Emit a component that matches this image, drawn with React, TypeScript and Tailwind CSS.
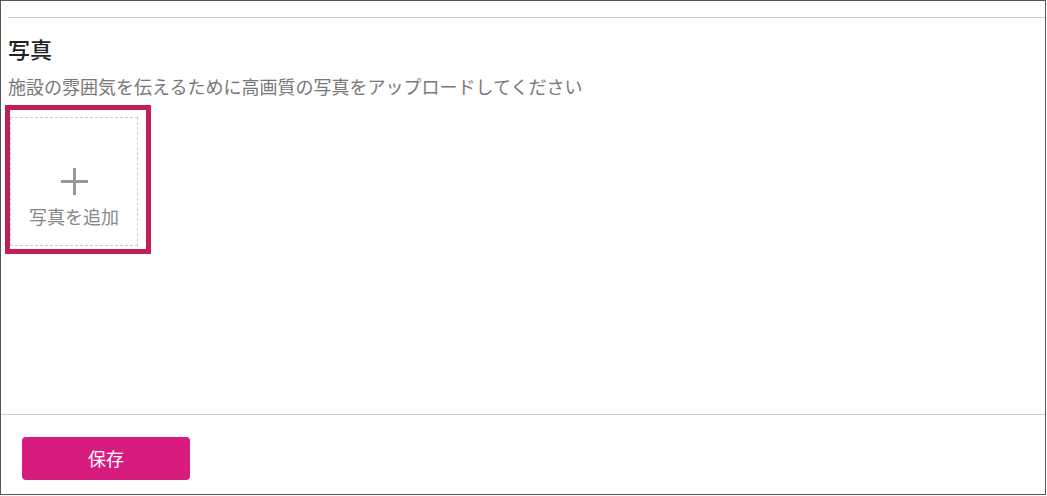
import React from "react";

export default function App() {
  const font = { fontFamily: '"Noto Sans CJK JP", "Noto Sans", sans-serif' };
  return (
    <div
      className="w-[1046px] h-[495px] border border-[#555] bg-white flex flex-col"
      style={font}
    >
      <div className="flex-1 pl-[7px]">
        <div className="mt-[16px] h-px bg-[#cfcfcf]" />
        <h2 className="mt-[15px] text-[22px] leading-[30px] font-medium text-[#222]">写真</h2>
        <p className="mt-[10px] text-[18px] leading-[26px] text-[#777]">
          施設の雰囲気を伝えるために高画質の写真をアップロードしてください
        </p>
        <div className="mt-[6px] -ml-[3px] w-[146px] h-[149px] border-[5px] border-[#c41e56] pt-[7px] pr-[8px] pb-[8px]">
          <div className="w-[128px] h-[129px] border border-dashed border-[#cccccc] flex flex-col items-center pt-[50px]">
            <svg width="27" height="27" viewBox="0 0 27 27">
              <path d="M13.5 0V27M0 13.5H27" stroke="#999" strokeWidth="3" />
            </svg>
            <span className="mt-[9px] text-[18px] leading-[24px] text-[#888]">写真を追加</span>
          </div>
        </div>
      </div>
      <div className="h-[80px] border-t border-[#cfcfcf] pl-[21px] pt-[22px]">
        <button className="w-[168px] h-[43px] rounded-[4px] bg-[#d81b7f] text-white text-[18px]">
          保存
        </button>
      </div>
    </div>
  );
}
